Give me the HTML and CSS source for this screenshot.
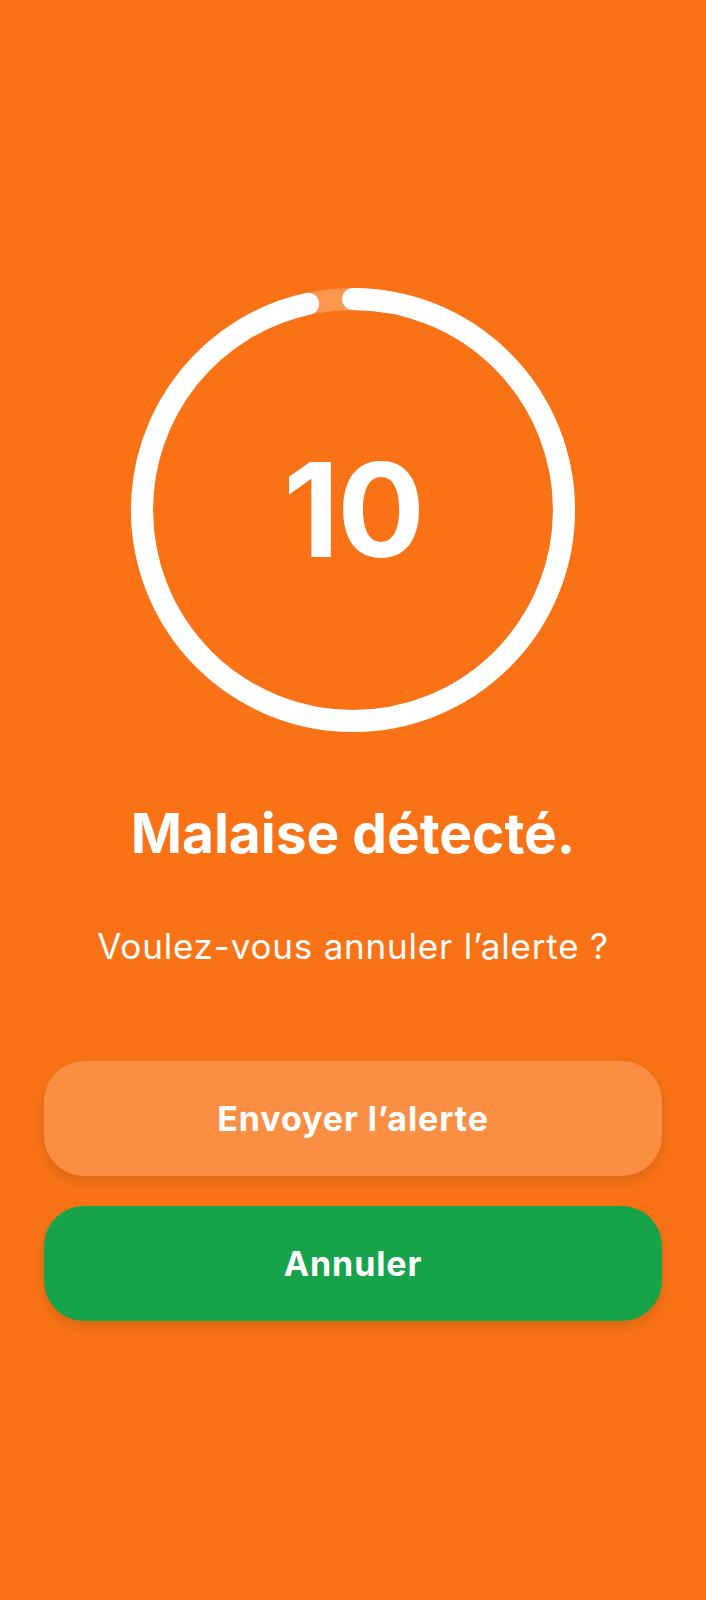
FILE: index.html
```html
<!DOCTYPE html>
<html lang="fr">
<head>
  <meta charset="utf-8">
  <title>Malaise détecté</title>
  <link rel="stylesheet" href="styles.css">
</head>
<body>
  <div class="screen">
    <div class="timer">
      <svg class="timer-ring" viewBox="0 0 444 444" width="444" height="444">
        <circle class="ring-track" cx="222" cy="222" r="211"></circle>
        <circle class="ring-progress" cx="222" cy="222" r="211" transform="rotate(-90 222 222)"></circle>
      </svg>
      <div class="timer-count">10</div>
    </div>

    <h1 class="title">Malaise détecté.</h1>
    <p class="question">Voulez-vous annuler l’alerte ?</p>

    <div class="actions">
      <button class="btn btn-send">Envoyer l’alerte</button>
      <button class="btn btn-cancel">Annuler</button>
    </div>
  </div>
</body>
</html>
```

FILE: styles.css
```css
:root {
  --orange: #f97316;
  --green: #16a34a;
  --white: #ffffff;
}

body {
  margin: 0;
  background-color: var(--orange);
  color: var(--white);
  font-family: 'Inter', 'Noto Sans', sans-serif;
}

.screen {
  min-height: 1600px;
  box-sizing: border-box;
  padding: 288px 44px 0;
  display: flex;
  flex-direction: column;
  align-items: center;
}

.timer {
  display: grid;
  place-items: center;
  width: 444px;
  height: 444px;
}

.timer > * {
  grid-area: 1 / 1;
}

.ring-track,
.ring-progress {
  fill: none;
  stroke-width: 22;
}

.ring-track {
  stroke: rgba(255, 255, 255, 0.25);
}

.ring-progress {
  stroke: var(--white);
  stroke-linecap: round;
  stroke-dasharray: 1280 1326;
}

.timer-count {
  font-size: 130px;
  font-weight: 700;
  line-height: 1;
  letter-spacing: -2px;
}

.title {
  margin: 68px 0 0;
  font-size: 55px;
  font-weight: 700;
  line-height: 1.2;
  text-align: center;
}

.question {
  margin: 58px 0 0;
  font-size: 35px;
  font-weight: 400;
  line-height: 1.3;
  letter-spacing: 0.8px;
  text-align: center;
}

.actions {
  align-self: stretch;
  margin-top: 91px;
  display: flex;
  flex-direction: column;
  gap: 30px;
}

.btn {
  height: 115px;
  border: none;
  border-radius: 40px;
  color: var(--white);
  font-family: inherit;
  font-size: 34px;
  font-weight: 700;
  letter-spacing: 0.9px;
  cursor: pointer;
  box-shadow: 0 6px 14px rgba(0, 0, 0, 0.12);
}

.btn-send {
  background-color: rgba(255, 255, 255, 0.2);
}

.btn-cancel {
  background-color: var(--green);
}
```
